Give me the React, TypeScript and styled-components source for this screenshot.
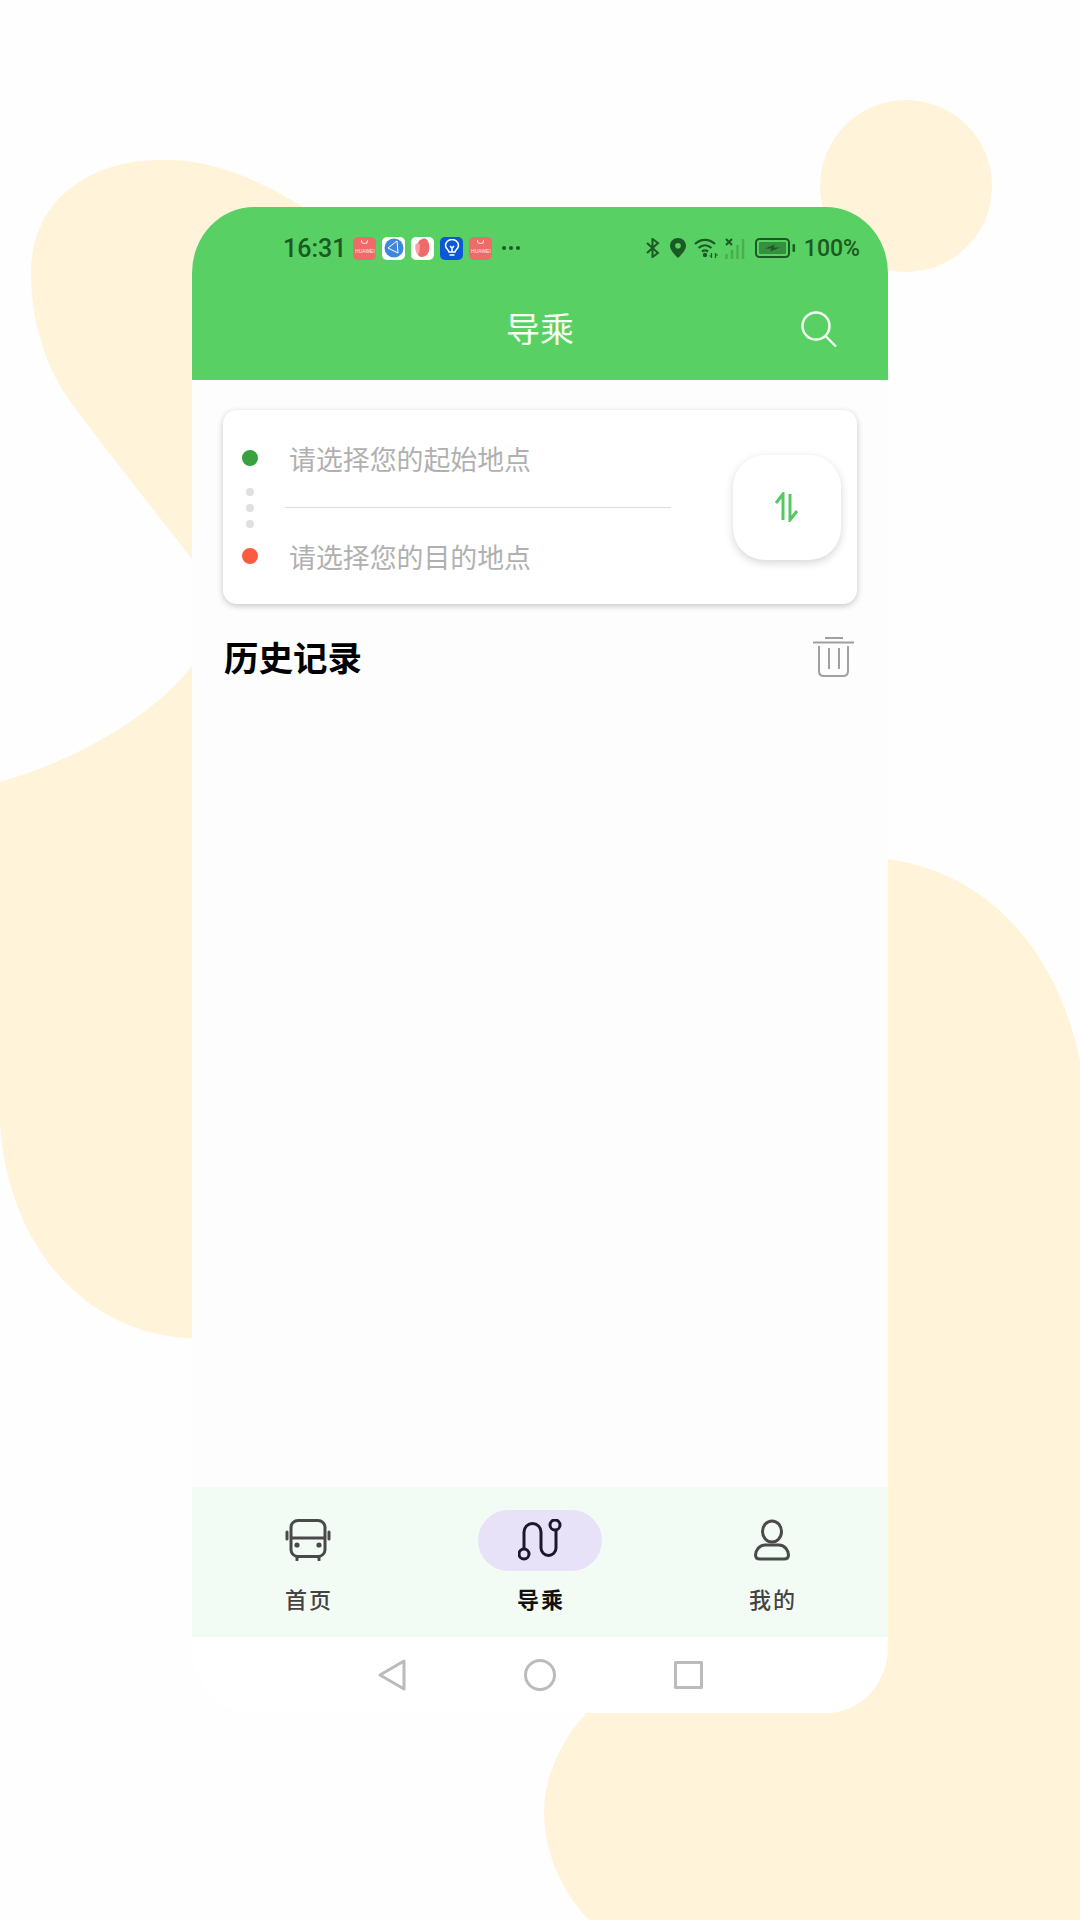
import styled, { createGlobalStyle } from "styled-components"

const GlobalStyle = createGlobalStyle`
  html, body {
    margin:0;
    padding:0;
    background:#fffefe;
  }
  * {
    box-sizing:border-box;
  }
`

const cjk = `"Noto Sans CJK SC", "Noto Sans", sans-serif`
const ink = "#1b5a22"
const cream = "#fff3da"

function Blobs() {
  return <BlobLayer viewBox="0 0 1080 1920">
    <path fill={cream} d="M160 160C210 158 260 180 305 208L400 300L192 559C160 518 110 455 72 404C48 372 31 325 31 273C31 200 90 160 160 160Z"/>
    <path fill={cream} d="M0 782C70 762 150 720 192 666L400 666L400 1338L192 1338C90 1336 8 1250 0 1124Z"/>
    <circle fill={cream} cx="906" cy="186" r="86"/>
    <path fill={cream} d="M888 859C1000 875 1060 965 1080 1060L1080 1920L589 1920C560 1890 544 1850 544 1811C544 1770 570 1725 600 1700L700 1600L888 1400Z"/>
  </BlobLayer>
}

function Bluetooth() {
  return <svg width="15" height="20" viewBox="0 0 15 20" fill="none" stroke={ink} strokeWidth="2">
    <path d="M2 5L13 15L7.5 19V1L13 5L2 15"/>
  </svg>
}

function Pin() {
  return <svg width="16" height="20" viewBox="0 0 16 20">
    <path fill={ink} fillRule="evenodd" d="M8 0C3.6 0 0 3.4 0 7.6C0 12.6 5.6 17.6 8 20C10.4 17.6 16 12.6 16 7.6C16 3.4 12.4 0 8 0ZM8 5A2.8 2.8 0 1 1 8 10.6A2.8 2.8 0 1 1 8 5Z"/>
  </svg>
}

function Wifi() {
  return <svg width="25" height="20" viewBox="0 0 25 20" fill="none" stroke={ink} strokeWidth="2.2">
    <path d="M1 6C7 0.5 15 0.5 21 6"/>
    <path d="M4.5 10C8.5 6.5 13.5 6.5 17.5 10"/>
    <path d="M8 13.5C10 12 12 12 14 13.5"/>
    <circle cx="11" cy="17" r="2.2" fill={ink} stroke="none"/>
    <path d="M17.5 15V20M21.5 15V20" strokeWidth="1.2"/>
    <path d="M15.5 18H18M21 17H24" strokeWidth="1.2"/>
  </svg>
}

function Signal() {
  return <svg width="22" height="21" viewBox="0 0 22 21" fill="none">
    <path d="M1 1L7 7M7 1L1 7" stroke={ink} strokeWidth="2"/>
    <path d="M1.5 16V21M7 12V21M12.5 7V21M18 1V21" stroke={ink} strokeOpacity="0.28" strokeWidth="2.4"/>
  </svg>
}

function Battery() {
  return <svg width="41" height="20" viewBox="0 0 41 20">
    <rect x="1" y="1" width="33" height="18" rx="3.5" fill="none" stroke={ink} strokeWidth="2"/>
    <rect x="4" y="4" width="27" height="12" rx="1" fill={ink} fillOpacity="0.55"/>
    <path fill={ink} d="M10 10.5L20 6.5L18.5 9.5H25L15 13.5L16.5 10.5Z"/>
    <rect x="37.5" y="6" width="2.6" height="8" rx="1" fill={ink}/>
  </svg>
}

function GlobeGlyph() {
  return <svg width="20" height="20" viewBox="0 0 20 20">
    <circle cx="10" cy="10" r="9.5" fill="#3f86dc"/>
    <path d="M4 10L13 3M4 10L14 15M13 3L14 15" stroke="#fff" strokeWidth="1" fill="none"/>
  </svg>
}

function PetalGlyph() {
  return <svg width="17" height="20" viewBox="0 0 15 19">
    <path fill="#f06a6a" d="M5 2C8 0 11 0 12 2C14 5 15 10 13 14C11 18 6 19 4 17C1 14 1 6 5 2Z"/>
    <path fill="#f9a3a3" d="M1 6C3 4 5 5 5 8C5 12 4 16 3 16C1 14 0 9 1 6Z"/>
  </svg>
}

function BulbGlyph() {
  return <svg width="16" height="19" viewBox="0 0 16 19" fill="none" stroke="#fff" strokeWidth="1.6">
    <path d="M5 13C5 11 1.5 9.5 1.5 6.5A6.5 6 0 0 1 14.5 6.5C14.5 9.5 11 11 11 13Z"/>
    <path d="M5.5 16H10.5M8 13V8M6 7L8 9L10 7"/>
  </svg>
}

function StoreIcon() {
  return <AppIcon $bg="#ee6b68">
    <StoreSmile/>
    <StoreName>HUAWEI</StoreName>
  </AppIcon>
}

function BusIcon() {
  return <svg width="46" height="42" viewBox="0 0 46 42" fill="none" stroke="#4a4a4a" strokeWidth="3">
    <rect x="6" y="1.5" width="34" height="36" rx="7"/>
    <path d="M6 19H40"/>
    <circle cx="12" cy="26" r="2.6" fill="#4a4a4a" stroke="none"/>
    <circle cx="34" cy="26" r="2.6" fill="#4a4a4a" stroke="none"/>
    <path d="M2 13V20M44 13V20M12 38V41M34 38V41" strokeLinecap="round"/>
  </svg>
}

function RouteIcon() {
  return <svg width="44" height="42" viewBox="0 0 44 42" fill="none" stroke="#1d1631" strokeWidth="3">
    <circle cx="6" cy="35" r="5"/>
    <circle cx="37" cy="6" r="5"/>
    <path d="M6 30V13A8.5 8.5 0 0 1 23 13V29A7.5 7.5 0 0 0 38 29V11"/>
  </svg>
}

function PersonIcon() {
  return <svg width="36" height="42" viewBox="0 0 36 42" fill="none" stroke="#4a4a4a" strokeWidth="3">
    <ellipse cx="18" cy="12.5" rx="9.5" ry="10.5"/>
    <path d="M11 26H25C31 26 34.5 32 34.5 36C34.5 39 33 40 30 40H6C3 40 1.5 39 1.5 36C1.5 32 5 26 11 26Z"/>
  </svg>
}

function TrashIcon() {
  return <svg width="41" height="40" viewBox="0 0 41 40" fill="none" stroke="#a0a0a0" strokeWidth="2">
    <path d="M12 1H30M0 5.5H41"/>
    <path d="M6 9V34C6 37 8 39 11 39H30C33 39 35 37 35 34V9"/>
    <path d="M16 11V32M26 11V32"/>
  </svg>
}

const tabs = [
  { label: "首页", icon: <BusIcon/> },
  { label: "导乘", icon: <RouteIcon/>, active: true },
  { label: "我的", icon: <PersonIcon/> },
]

export default function App() {
  return <Page>
    <GlobalStyle/>
    <Blobs/>
    <Phone>
      <Header>
        <StatusBar>
          <StatusGroup>
            <Time>16:31</Time>
            <AppIcons>
              <StoreIcon/>
              <AppIcon $bg="#fff"><GlobeGlyph/></AppIcon>
              <AppIcon $bg="#fff"><PetalGlyph/></AppIcon>
              <AppIcon $bg="#0a58d6"><BulbGlyph/></AppIcon>
              <StoreIcon/>
            </AppIcons>
            <MoreDots>
              <MoreDot/>
              <MoreDot/>
              <MoreDot/>
            </MoreDots>
          </StatusGroup>
          <StatusGroup>
            <SystemIcons>
              <Bluetooth/>
              <Pin/>
              <Wifi/>
              <Signal/>
              <Battery/>
            </SystemIcons>
            <Percent>100%</Percent>
          </StatusGroup>
        </StatusBar>
        <TitleBar>
          <Title>导乘</Title>
          <SearchButton>
            <svg width="36" height="36" viewBox="0 0 36 36" fill="none" stroke="#f2fff0" strokeWidth="2.4">
              <circle cx="15" cy="15" r="13.5"/>
              <path d="M24.5 25L35 35.5"/>
            </svg>
          </SearchButton>
        </TitleBar>
      </Header>
      <Body>
        <RouteCard>
          <Markers>
            <Dot $size={16} $color="#37a23f"/>
            <DotStack>
              <Dot $size={8} $color="#e0e0e0"/>
              <Dot $size={8} $color="#e0e0e0"/>
              <Dot $size={8} $color="#e0e0e0"/>
            </DotStack>
            <Dot $size={16} $color="#fb5c3f"/>
          </Markers>
          <Places>
            <Place>请选择您的起始地点</Place>
            <PlaceLine/>
            <Place>请选择您的目的地点</Place>
          </Places>
          <SwapButton>
            <svg width="24" height="30" viewBox="0 0 24 30" fill="none" stroke="#55c864" strokeWidth="3">
              <path d="M1 11L8 2V28"/>
              <path d="M15 2V28L22 19"/>
            </svg>
          </SwapButton>
        </RouteCard>
        <SectionHead>
          <SectionTitle>历史记录</SectionTitle>
          <TrashIcon/>
        </SectionHead>
      </Body>
      <TabBar>
        {tabs.map((tab) => <Tab key={tab.label}>
          <TabIcon $active={tab.active}>{tab.icon}</TabIcon>
          <TabLabel $active={tab.active}>{tab.label}</TabLabel>
        </Tab>)}
      </TabBar>
      <SystemNav>
        <svg width="28" height="32" viewBox="0 0 28 32" fill="none" stroke="#bbb" strokeWidth="3" strokeLinejoin="round">
          <path d="M26 2V30L2 16Z"/>
        </svg>
        <svg width="32" height="32" viewBox="0 0 32 32" fill="none" stroke="#bbb" strokeWidth="3">
          <circle cx="16" cy="16" r="14.5"/>
        </svg>
        <svg width="29" height="28" viewBox="0 0 29 28" fill="none" stroke="#bbb" strokeWidth="3" strokeLinejoin="round">
          <rect x="1.5" y="1.5" width="26" height="25"/>
        </svg>
      </SystemNav>
    </Phone>
  </Page>
}

const Page = styled.div`
  position:relative;
  width:1080px;
  height:1920px;
  padding:207px 0 0 192px;
  overflow:hidden;
  background:#fffefe;
`
const BlobLayer = styled.svg`
  position:absolute;
  left:0;
  top:0;
  width:1080px;
  height:1920px;
`
const Phone = styled.div`
  position:relative;
  display:flex;
  flex-direction:column;
  width:696px;
  height:1506px;
  border-radius:62px / 66px;
  overflow:hidden;
  background:#fdfdfd;
  font-family:${cjk};
`
const Header = styled.div`
  height:173px;
  flex:none;
  background:#58d063;
`
const StatusBar = styled.div`
  display:flex;
  justify-content:space-between;
  align-items:center;
  height:61px;
  padding:21px 28px 0 91px;
  color:${ink};
`
const StatusGroup = styled.div`
  display:flex;
  align-items:center;
`
const Time = styled.span`
  font-family:Roboto, sans-serif;
  font-size:25px;
  font-weight:500;
`
const AppIcons = styled.div`
  display:flex;
  gap:6px;
  margin-left:7px;
`
const AppIcon = styled.div<{ $bg: string }>`
  position:relative;
  display:flex;
  align-items:center;
  justify-content:center;
  width:23px;
  height:23px;
  border-radius:5px;
  background:${(p) => p.$bg};
`
const StoreSmile = styled.i`
  position:absolute;
  top:3px;
  left:8px;
  width:7px;
  height:4px;
  border:1px solid #ffd9d6;
  border-top:none;
  border-radius:0 0 7px 7px;
`
const StoreName = styled.span`
  margin-top:6px;
  font-family:"Liberation Sans", sans-serif;
  font-size:5px;
  color:#ffe9e6;
`
const MoreDots = styled.div`
  display:flex;
  gap:3px;
  margin-left:10px;
`
const MoreDot = styled.i`
  width:4px;
  height:4px;
  border-radius:50%;
  background:${ink};
`
const SystemIcons = styled.div`
  display:flex;
  align-items:center;
  gap:8px;
  svg:nth-child(2) {
    margin-left:2px;
  }
  svg:nth-child(4) {
    margin-left:-2px;
  }
`
const Percent = styled.span`
  margin-left:8px;
  font-family:Roboto, sans-serif;
  font-size:23px;
  font-weight:500;
`
const TitleBar = styled.div`
  display:grid;
  grid-template-columns:1fr auto 1fr;
  align-items:center;
  height:112px;
  padding:8px 51px 0;
`
const Title = styled.div`
  grid-column:2;
  font-size:34px;
  line-height:40px;
  color:#f6fff3;
`
const SearchButton = styled.div`
  display:flex;
  justify-self:end;
  margin-top:2px;
`
const Body = styled.div`
  flex:1;
  padding:30px 31px 0;
`
const RouteCard = styled.div`
  display:flex;
  align-items:center;
  height:194px;
  padding:0 16px 0 19px;
  border-radius:14px;
  background:#fff;
  box-shadow:0 2px 6px rgba(0, 0, 0, 0.22);
`
const Markers = styled.div`
  display:flex;
  flex-direction:column;
  align-items:center;
  flex:none;
`
const Dot = styled.i<{ $size: number; $color: string }>`
  display:block;
  width:${(p) => p.$size}px;
  height:${(p) => p.$size}px;
  border-radius:50%;
  background:${(p) => p.$color};
`
const DotStack = styled.div`
  display:flex;
  flex-direction:column;
  gap:8px;
  margin:22px 0 20px;
`
const Places = styled.div`
  display:flex;
  flex-direction:column;
  width:386px;
  margin-left:27px;
  padding-top:2px;
`
const Place = styled.div`
  height:40px;
  padding-left:4px;
  font-size:26.9px;
  line-height:40px;
  color:#b0b0b0;
`
const PlaceLine = styled.div`
  height:1.5px;
  margin:28px 0 29px;
  background:#dcdcdc;
`
const SwapButton = styled.div`
  display:flex;
  align-items:center;
  justify-content:center;
  width:108px;
  height:105px;
  margin-left:auto;
  border-radius:32px;
  background:#fff;
  box-shadow:0 3px 8px rgba(0, 0, 0, 0.16);
`
const SectionHead = styled.div`
  display:flex;
  justify-content:space-between;
  align-items:center;
  height:40px;
  margin-top:33px;
  padding:0 3px 0 1px;
`
const SectionTitle = styled.div`
  margin-top:-2px;
  font-size:34.5px;
  font-weight:700;
  color:#000;
`
const TabBar = styled.div`
  display:grid;
  grid-template-columns:repeat(3, 1fr);
  height:150px;
  flex:none;
  background:#f3fcf4;
`
const Tab = styled.div`
  display:flex;
  flex-direction:column;
  align-items:center;
  padding-top:23px;
`
const TabIcon = styled.div<{ $active?: boolean }>`
  display:flex;
  align-items:center;
  justify-content:center;
  width:124px;
  height:61px;
  padding-bottom:2px;
  border-radius:31px;
  background:${(p) => (p.$active ? "#e8e2f8" : "transparent")};
`
const TabLabel = styled.div<{ $active?: boolean }>`
  margin-top:12px;
  padding-left:2px;
  font-size:22px;
  line-height:30px;
  letter-spacing:2px;
  font-weight:${(p) => (p.$active ? 700 : 500)};
  color:${(p) => (p.$active ? "#111" : "#444")};
`
const SystemNav = styled.div`
  display:flex;
  align-items:center;
  justify-content:center;
  gap:118px;
  flex:none;
  height:76px;
  background:#fff;
`
